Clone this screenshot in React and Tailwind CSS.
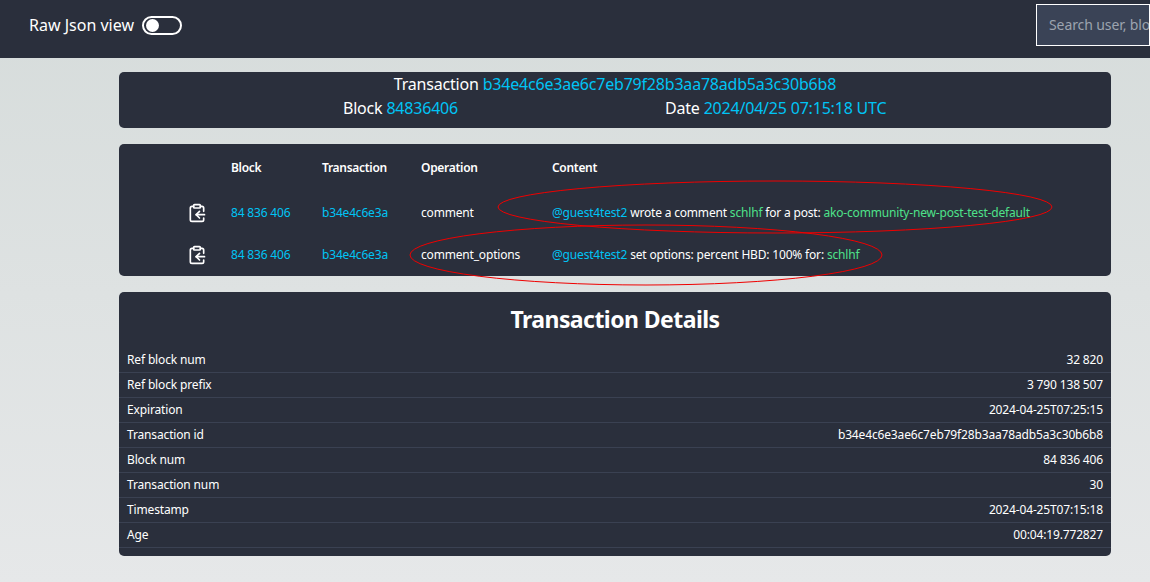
import { ClipboardCopy } from "lucide-react";

const rows = [
  ["Ref block num", "32 820"],
  ["Ref block prefix", "3 790 138 507"],
  ["Expiration", "2024-04-25T07:25:15"],
  ["Transaction id", "b34e4c6e3ae6c7eb79f28b3aa78adb5a3c30b6b8"],
  ["Block num", "84 836 406"],
  ["Transaction num", "30"],
  ["Timestamp", "2024-04-25T07:15:18"],
  ["Age", "00:04:19.772827"],
];

function OperationRow({ operation, children }) {
  return (
    <div className="flex h-[42px] items-center text-[12px] tracking-[-0.18px]">
      <div className="flex w-[112px] justify-end pr-[24px]">
        <ClipboardCopy size={20} strokeWidth={2} className="text-white" />
      </div>
      <div className="w-[91px] text-[#00c4f5]">84 836 406</div>
      <div className="w-[99px] text-[#00c4f5]">b34e4c6e3a</div>
      <div className="w-[131px]">{operation}</div>
      <div>{children}</div>
    </div>
  );
}

export default function App() {
  return (
    <div className="relative h-[582px] overflow-hidden bg-gradient-to-b from-[#d6dcdb] to-[#e6e8e9] font-['Noto_Sans',sans-serif] text-white">
      <header className="flex h-[58px] items-start justify-between bg-[#2a2f3c]">
        <div className="flex h-[50px] items-center pl-[29px]">
          <span className="text-[16px]">Raw Json view</span>
          <div className="ml-[8px] flex h-[19px] w-[40px] items-center rounded-full border-2 border-white px-[2px]">
            <div className="h-[13px] w-[13px] rounded-full bg-white" />
          </div>
        </div>
        <div className="mt-[4px] flex h-[42px] w-[114px] items-center overflow-hidden whitespace-nowrap border border-white bg-[#3a4356] pb-[2px] pl-[12px] text-[14px] tracking-[-0.1px] text-[#9ca3af]">
          Search user, block
        </div>
      </header>

      <main className="mx-[39px] ml-[119px] flex flex-col gap-[16px] pt-[14px]">
        <section className="flex h-[56px] flex-col items-center rounded-[5px] bg-[#2a2f3c] text-[16px] leading-[24px] tracking-[-0.2px]">
          <div>
            Transaction <span className="text-[#00c4f5]">b34e4c6e3ae6c7eb79f28b3aa78adb5a3c30b6b8</span>
          </div>
          <div className="flex w-full">
            <div className="w-1/2 pr-[157px] text-right">
              Block <span className="text-[#00c4f5]">84836406</span>
            </div>
            <div className="w-1/2 pl-[50px]">
              Date <span className="text-[#00c4f5]">2024/04/25 07:15:18 UTC</span>
            </div>
          </div>
        </section>

        <section className="h-[132px] rounded-[5px] bg-[#2a2f3c]">
          <div className="flex h-[48px] items-center text-[12px] font-semibold tracking-[-0.3px]">
            <div className="w-[112px]" />
            <div className="w-[91px]">Block</div>
            <div className="w-[99px]">Transaction</div>
            <div className="w-[131px]">Operation</div>
            <div>Content</div>
          </div>
          <OperationRow operation="comment">
            <span className="text-[#00c4f5]">@guest4test2</span> wrote a comment{" "}
            <span className="text-[#4ee28a]">schlhf</span> for a post:{" "}
            <span className="text-[#4ee28a]">ako-community-new-post-test-default</span>
          </OperationRow>
          <OperationRow operation="comment_options">
            <span className="text-[#00c4f5]">@guest4test2</span> set options: percent HBD: 100% for:{" "}
            <span className="text-[#4ee28a]">schlhf</span>
          </OperationRow>
        </section>

        <section className="h-[264px] rounded-[5px] bg-[#2a2f3c]">
          <h2 className="h-[56px] pt-[9px] text-center text-[23px] font-bold leading-[36px] tracking-[-0.55px]">
            Transaction Details
          </h2>
          {rows.map(([label, value]) => (
            <div
              key={label}
              className="flex h-[25px] items-center justify-between border-b border-[#3a4152] px-[8px] text-[12px] tracking-[-0.15px]"
            >
              <span>{label}</span>
              <span>{value}</span>
            </div>
          ))}
        </section>
      </main>

      <svg className="pointer-events-none absolute inset-0" width="1150" height="582" fill="none" stroke="#f00000">
        <ellipse cx="775" cy="207" rx="277" ry="26" />
        <ellipse cx="646" cy="255" rx="236" ry="30" />
      </svg>
    </div>
  );
}
